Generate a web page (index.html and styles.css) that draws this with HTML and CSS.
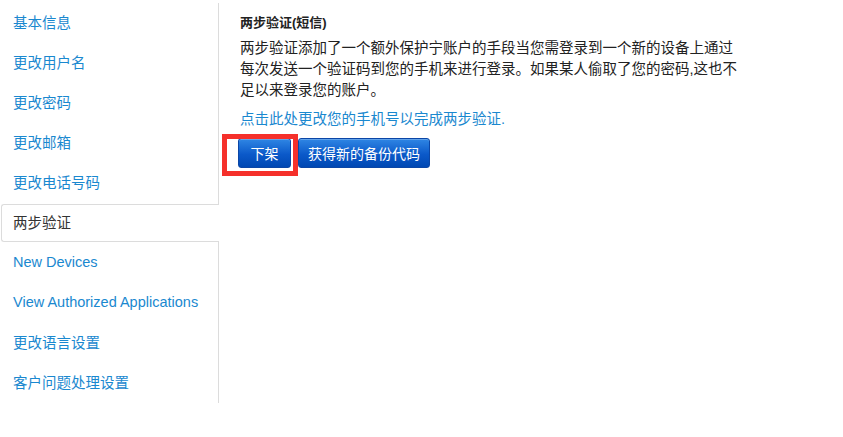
FILE: index.html
```html
<!DOCTYPE html>
<html lang="zh-CN">
<head>
<meta charset="utf-8">
<title>两步验证</title>
<link rel="stylesheet" href="styles.css">
</head>
<body>
<div class="page">
  <ul class="sidenav">
    <li class="item"><a class="link" href="#">基本信息</a></li>
    <li class="item"><a class="link" href="#">更改用户名</a></li>
    <li class="item"><a class="link" href="#">更改密码</a></li>
    <li class="item"><a class="link" href="#">更改邮箱</a></li>
    <li class="item"><a class="link" href="#">更改电话号码</a></li>
    <li class="item active"><a class="link" href="#">两步验证</a></li>
    <li class="item"><a class="link" href="#">New Devices</a></li>
    <li class="item"><a class="link" href="#">View Authorized Applications</a></li>
    <li class="item"><a class="link" href="#">更改语言设置</a></li>
    <li class="item"><a class="link" href="#">客户问题处理设置</a></li>
  </ul>
  <div class="content">
    <h4 class="title">两步验证(短信)</h4>
    <p class="desc">两步验证添加了一个额外保护宁账户的手段当您需登录到一个新的设备上通过每次发送一个验证码到您的手机来进行登录。如果某人偷取了您的密码,这也不足以来登录您的账户。</p>
    <p class="change"><a class="change-link" href="#">点击此处更改您的手机号以完成两步验证.</a></p>
    <div class="actions">
      <span class="highlight-wrap">
        <button class="btn btn-first" type="button">下架</button>
        <span class="highlight"></span>
      </span>
      <button class="btn btn-second" type="button">获得新的备份代码</button>
    </div>
  </div>
</div>
</body>
</html>
```
FILE: styles.css
```css
html, body {
  margin: 0;
  padding: 0;
  background: #fff;
}
body {
  font-family: "Liberation Sans", "Noto Sans CJK SC", Arial, sans-serif;
  font-size: 14.5px;
  color: #333;
}
.page {
  display: flex;
  align-items: flex-start;
  padding-top: 3px;
}
.sidenav {
  list-style: none;
  margin: 0;
  padding: 0;
  width: 218px;
  border-right: 1px solid #dcdcdc;
  flex: none;
}
.item {
  height: 40px;
  display: flex;
}
.link {
  flex: 1;
  display: flex;
  align-items: center;
  padding-left: 13px;
  padding-bottom: 3px;
  color: #1a88cf;
  text-decoration: none;
  white-space: nowrap;
}
.item.active {
  margin-right: -1px;
  padding: 1px 0 1px 1px;
  box-sizing: border-box;
}
.item.active .link {
  background: #fff;
  border: 1px solid #dcdcdc;
  border-right: none;
  border-radius: 3px 0 0 3px;
  padding-left: 11px;
  color: #333;
}
.content {
  padding-left: 21px;
  width: 505px;
}
.title {
  margin: 11px 0 6px;
  font-size: 13px;
  font-weight: bold;
  line-height: 18px;
  color: #222;
}
.desc {
  margin: 0;
  line-height: 21px;
  color: #222;
}
.change {
  margin: 8px 0 0;
  line-height: 21px;
}
.change-link {
  color: #1a88cf;
  text-decoration: none;
}
.actions {
  display: flex;
  align-items: center;
  margin-top: 8px;
}
.highlight-wrap {
  position: relative;
  display: inline-flex;
  margin-left: -2px;
  margin-right: 7px;
}
.highlight {
  position: absolute;
  left: -16px;
  top: -4px;
  right: -7px;
  bottom: -8px;
  border: 5px solid #f5302b;
  pointer-events: none;
}
.btn {
  font-family: "Noto Sans CJK SC", "Liberation Sans", sans-serif;
  font-size: 14px;
  color: #fff;
  height: 30px;
  border: 1px solid #0b46a6;
  border-radius: 3px;
  background: linear-gradient(#2f86e4, #0b59c9 55%, #0048b3);
  box-shadow: inset 0 1px 0 rgba(255,255,255,0.25);
  line-height: 28px;
  cursor: pointer;
}
.btn-first {
  width: 53px;
  padding: 0;
}
.btn-second {
  width: 132px;
  padding: 0;
}
```
